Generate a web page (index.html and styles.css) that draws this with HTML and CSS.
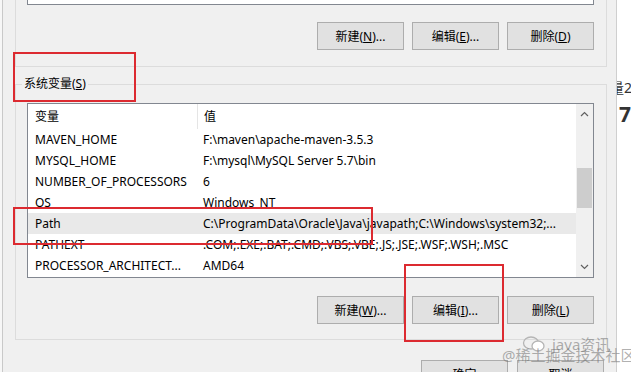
FILE: index.html
```html
<!DOCTYPE html>
<html lang="zh-CN">
<head>
    <meta charset="UTF-8">
    <title>环境变量</title>
    <link rel="stylesheet" href="styles.css">
</head>
<body>
    <div class="screen">
        <div class="bg-left"></div>
        <div class="dialog">
            <div class="group group-user">
                <div class="listbox listbox-user"></div>
                <div class="btn-row">
                    <button class="btn">新建(<u>N</u>)...</button>
                    <button class="btn">编辑(<u>E</u>)...</button>
                    <button class="btn">删除(<u>D</u>)</button>
                </div>
            </div>
            <fieldset class="group group-sys">
                <legend>系统变量(<u>S</u>)</legend>
                <div class="listbox">
                    <div class="list-main">
                        <div class="row head">
                            <span class="col-name">变量</span>
                            <span class="col-value">值</span>
                        </div>
                        <div class="row"><span class="col-name">MAVEN_HOME</span><span class="col-value">F:\maven\apache-maven-3.5.3</span></div>
                        <div class="row"><span class="col-name">MYSQL_HOME</span><span class="col-value">F:\mysql\MySQL Server 5.7\bin</span></div>
                        <div class="row"><span class="col-name">NUMBER_OF_PROCESSORS</span><span class="col-value">6</span></div>
                        <div class="row"><span class="col-name">OS</span><span class="col-value">Windows_NT</span></div>
                        <div class="row selected"><span class="col-name">Path</span><span class="col-value">C:\ProgramData\Oracle\Java\javapath;C:\Windows\system32;...</span></div>
                        <div class="row"><span class="col-name">PATHEXT</span><span class="col-value">.COM;.EXE;.BAT;.CMD;.VBS;.VBE;.JS;.JSE;.WSF;.WSH;.MSC</span></div>
                        <div class="row"><span class="col-name">PROCESSOR_ARCHITECT...</span><span class="col-value">AMD64</span></div>
                    </div>
                    <div class="scrollbar">
                        <svg class="arrow" width="9" height="6" viewBox="0 0 9 6"><path d="M1 5 L4.5 1.5 L8 5" fill="none" stroke="#606060" stroke-width="1.2"/></svg>
                        <div class="track"><div class="thumb"></div></div>
                        <svg class="arrow" width="9" height="6" viewBox="0 0 9 6"><path d="M1 1 L4.5 4.5 L8 1" fill="none" stroke="#606060" stroke-width="1.2"/></svg>
                    </div>
                </div>
                <div class="btn-row">
                    <button class="btn">新建(<u>W</u>)...</button>
                    <button class="btn">编辑(<u>I</u>)...</button>
                    <button class="btn">删除(<u>L</u>)</button>
                </div>
            </fieldset>
            <div class="btn-row dialog-btns">
                <button class="btn">确定</button>
                <button class="btn">取消</button>
            </div>
        </div>
        <div class="bg-right">
            <div class="peek peek-1">量2</div>
            <div class="peek peek-2">7.</div>
        </div>

        <div class="mark mark-label"></div>
        <div class="mark mark-path"></div>
        <div class="mark mark-edit"></div>

        <div class="watermark wm-top">
            <svg width="24" height="16" viewBox="0 0 24 16"><ellipse cx="9" cy="7" rx="7.5" ry="6" fill="none" stroke="#b5b5b5" stroke-width="1.3"/><ellipse cx="16" cy="10" rx="6" ry="5" fill="#fff" stroke="#b5b5b5" stroke-width="1.3"/></svg>
            <span>java资讯</span>
        </div>
        <div class="watermark wm-bottom">@稀土掘金技术社区</div>
    </div>
</body>
</html>
```

FILE: styles.css
```css
body {
    margin: 0;
    font-family: "Noto Sans", "Noto Sans CJK SC", sans-serif;
    font-size: 12px;
    color: #000;
    background: #fff;
}
.screen {
    position: relative;
    width: 631px;
    height: 372px;
    display: flex;
    overflow: hidden;
}
.bg-left {
    width: 2px;
    background: #f7f7f7;
}
.dialog {
    width: 615px;
    background: #f0f0f0;
    border-left: 1px solid #c9c9c9;
    border-right: 1px solid #cfcfcf;
    box-sizing: border-box;
    padding-left: 12px;
}
.bg-right {
    flex: 1;
    background: #fff;
    overflow: hidden;
    white-space: nowrap;
}
.peek {
    color: #333;
    margin-left: -7px;
}
.peek-1 {
    margin-top: 77px;
    font-size: 14px;
}
.peek-2 {
    margin-top: 5px;
    margin-left: 2px;
    font-size: 21px;
    font-weight: bold;
    line-height: 24px;
}

/* group boxes */
.group {
    width: 592px;
    box-sizing: border-box;
    border: 1px solid #dcdcdc;
    padding: 0 12px 0 11px;
}
.group-user {
    border-top: none;
    height: 67px;
}
.listbox {
    background: #fff;
    border: 1px solid #828790;
    display: flex;
}
.listbox-user {
    height: 4px;
    border-top: none;
}
.group-sys {
    margin: 9px 0 0;
    padding: 0 12px 15px 5px;
    min-width: 0;
}
.group-sys legend {
    padding: 0 2px;
    margin-left: 1px;
    line-height: 16px;
}
.group-sys .listbox {
    margin: 11px 0 0 6px;
    height: 175px;
    box-sizing: border-box;
}

/* list rows */
.list-main {
    flex: 1;
    overflow: hidden;
}
.row {
    display: flex;
    height: 21px;
    line-height: 21px;
    white-space: nowrap;
}
.row.head {
    height: 25px;
    line-height: 25px;
}
.row.selected {
    background: #e9e9e9;
}
.col-name {
    width: 162px;
    padding-left: 7px;
    flex-shrink: 0;
}
.head .col-name {
    border-right: 1px solid #e5e5e5;
}
.col-value {
    padding-left: 6px;
}

.scrollbar {
    width: 17px;
    background: #f0f0f0;
    display: flex;
    flex-direction: column;
    align-items: center;
}
.scrollbar .arrow {
    margin: 7px 0;
}
.track {
    flex: 1;
    width: 100%;
    padding-top: 44px;
}
.thumb {
    margin: 0 auto;
    width: 15px;
    height: 40px;
    background: #cdcdcd;
}

/* buttons */
.btn-row {
    display: flex;
    justify-content: flex-end;
    gap: 8px;
    margin-top: 17px;
}
.btn {
    width: 87px;
    height: 28px;
    padding: 0;
    background: #e1e1e1;
    border: 1px solid #adadad;
    font-family: inherit;
    font-size: 12px;
    color: #000;
}
.group-sys .btn-row {
    margin-top: 18px;
}
.dialog-btns {
    width: 589px;
    gap: 9px;
    margin-top: 20px;
}

/* red annotation boxes */
.mark {
    position: absolute;
    border: 2px solid #dc2a30;
}
.mark-label {
    left: 13px;
    top: 52px;
    width: 119px;
    height: 46px;
}
.mark-path {
    left: 13px;
    top: 207px;
    width: 356px;
    height: 34px;
}
.mark-edit {
    left: 404px;
    top: 264px;
    width: 96px;
    height: 74px;
}

/* watermark */
.watermark {
    position: absolute;
    color: rgba(110, 110, 110, 0.55);
    font-size: 15px;
    white-space: nowrap;
}
.wm-top {
    left: 522px;
    top: 333px;
    display: flex;
    align-items: center;
    gap: 6px;
}
.wm-bottom {
    left: 502px;
    top: 344px;
}
```
